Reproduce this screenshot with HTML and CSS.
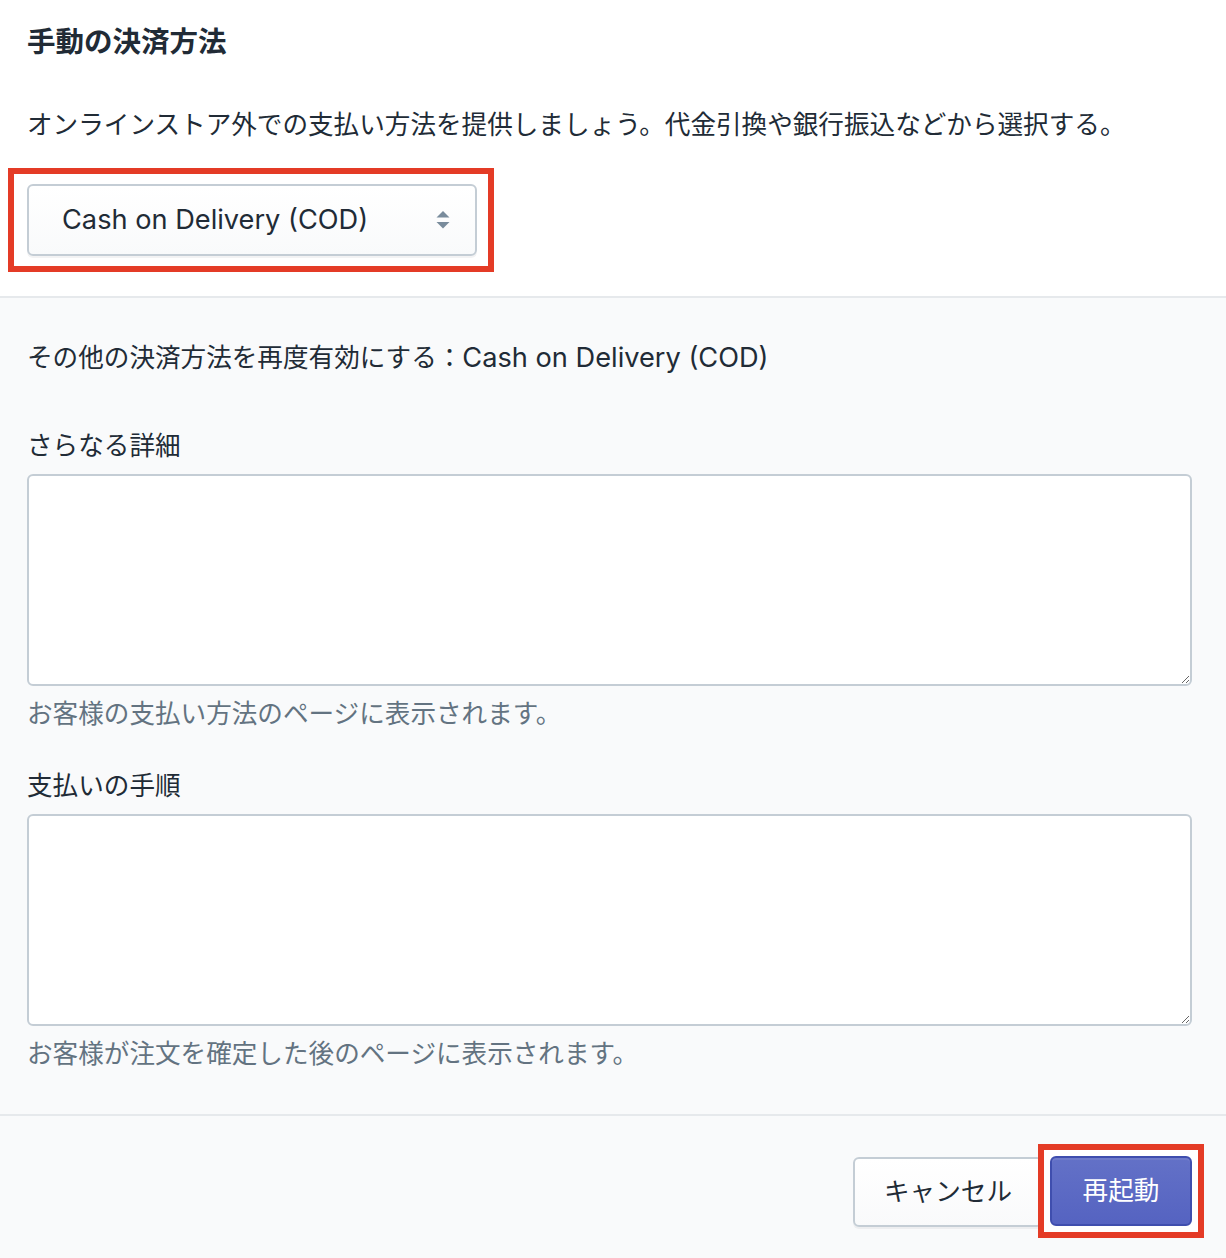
FILE: index.html
```html
<!DOCTYPE html>
<html lang="ja">
<head>
<meta charset="utf-8">
<title>手動の決済方法</title>
<link rel="stylesheet" href="styles.css">
</head>
<body>
<div class="card">
  <section class="top">
    <h2 class="title">手動の決済方法</h2>
    <p class="desc">オンラインストア外での支払い方法を提供しましょう。代金引換や銀行振込などから選択する。</p>
    <div class="highlight highlight-select">
      <div class="select">
        <span class="select-text latin">Cash on Delivery (COD)</span>
        <svg class="select-arrows" width="14" height="18" viewBox="0 0 14 18" aria-hidden="true">
          <path d="M7 0 L13.5 6.5 H0.5 Z" fill="#798c9c"/>
          <path d="M7 17.5 L13.5 11 H0.5 Z" fill="#798c9c"/>
        </svg>
      </div>
    </div>
  </section>
  <section class="body">
    <p class="reenable">その他の決済方法を再度有効にする：<span class="latin">Cash on Delivery (COD)</span></p>
    <div class="field field-first">
      <label class="label">さらなる詳細</label>
      <textarea class="textarea"></textarea>
      <p class="help">お客様の支払い方法のページに表示されます。</p>
    </div>
    <div class="field field-second">
      <label class="label">支払いの手順</label>
      <textarea class="textarea"></textarea>
      <p class="help">お客様が注文を確定した後のページに表示されます。</p>
    </div>
  </section>
  <footer class="footer">
    <button class="btn btn-cancel" type="button">キャンセル</button>
    <div class="highlight highlight-btn">
      <button class="btn btn-primary" type="button">再起動</button>
    </div>
  </footer>
</div>
</body>
</html>
```
FILE: styles.css
```css
* { box-sizing: border-box; }
html, body {
  margin: 0;
  padding: 0;
  background: #ffffff;
}
body {
  font-family: Inter, "Noto Sans CJK JP", sans-serif;
  font-size: 25.6px;
  color: #212b36;
  width: 1226px;
  height: 1258px;
  overflow: hidden;
}
.latin {
  font-size: 27.2px;
}
.card {
  display: flex;
  flex-direction: column;
  height: 1258px;
}
.top {
  background: #ffffff;
  padding: 25px 27px 24px;
  border-bottom: 2px solid #e6e9ec;
}
.title {
  margin: 0;
  font-size: 28.5px;
  line-height: 34px;
  font-weight: 700;
  color: #212b36;
}
.desc {
  margin: 49px 0 0;
  line-height: 34px;
}
.highlight {
  display: inline-flex;
  border: 6px solid #e43b26;
  background: #ffffff;
}
.highlight-select {
  margin: 26px 0 0 -19px;
  padding: 10px 11px 10px 13px;
}
.select {
  width: 450px;
  height: 72px;
  display: flex;
  align-items: center;
  justify-content: space-between;
  padding: 0 25px 0 33px;
  border: 2px solid #c4cdd5;
  border-radius: 6px;
  background: linear-gradient(#ffffff, #f9fafb);
  box-shadow: 0 2px 0 0 rgba(22, 29, 37, 0.05);
}
.select-text {
  line-height: 34px;
  color: #212b36;
}
.select-arrows { display: block; }
.body {
  background: #f9fafb;
  padding: 43px 34px 43px 27px;
  border-bottom: 2px solid #e6e9ec;
}
.reenable {
  margin: 0;
  line-height: 34px;
}
.field { display: flex; flex-direction: column; }
.field-first { margin-top: 54px; }
.field-second { margin-top: 38px; }
.label {
  line-height: 34px;
  color: #212b36;
}
.textarea {
  margin-top: 11px;
  width: 100%;
  height: 212px;
  border: 2px solid #c4cdd5;
  border-radius: 6px;
  background: #ffffff;
  font: inherit;
  display: block;
}
.help {
  margin: 11px 0 0;
  line-height: 34px;
  color: #637381;
}
.footer {
  flex: 1;
  background: #f9fafb;
  display: flex;
  justify-content: flex-end;
  align-items: flex-start;
  padding: 28px 22px 0 0;
}
.btn {
  font-family: inherit;
  font-size: 25.6px;
  height: 70px;
  border-radius: 6px;
  cursor: pointer;
  line-height: 34px;
}
.btn-cancel {
  margin-top: 13px;
  width: 190px;
  margin-right: -5px;
  padding: 0 0 0 29px;
  text-align: left;
  border: 2px solid #c4cdd5;
  background: linear-gradient(#ffffff, #f9fafb);
  color: #212b36;
  box-shadow: 0 2px 0 0 rgba(22, 29, 37, 0.05);
}
.highlight-btn {
  padding: 6px;
}
.btn-primary {
  width: 142px;
  border: 2px solid #3f4eae;
  background: linear-gradient(#6371c7, #5563c1);
  color: #ffffff;
  box-shadow: inset 0 2px 0 0 #6f7bcb;
}
```
